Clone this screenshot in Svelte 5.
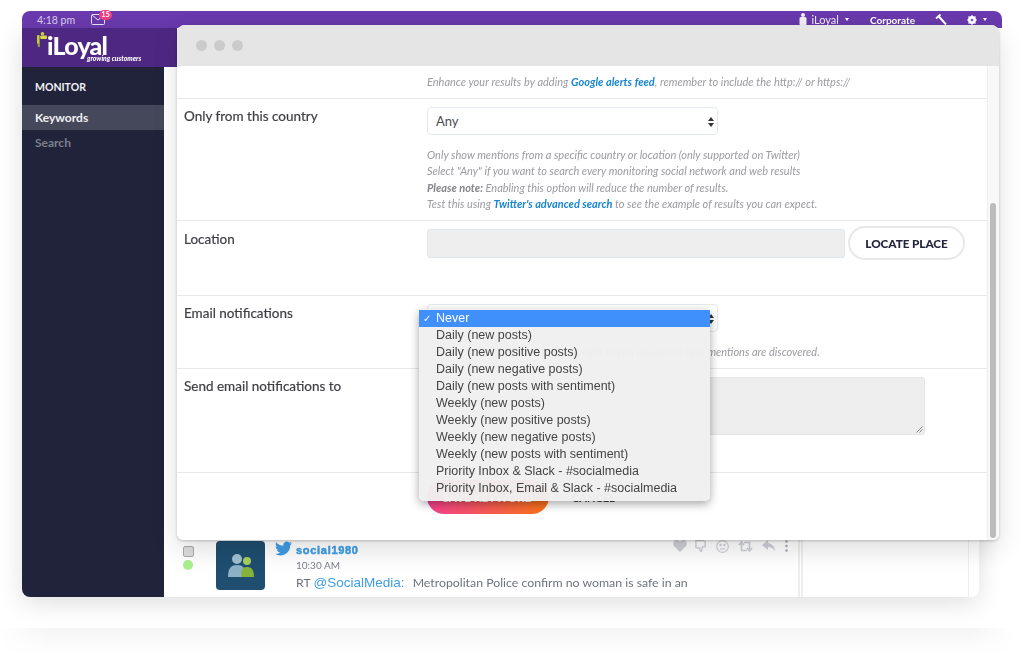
<script>
  let options = [
    "Never",
    "Daily (new posts)",
    "Daily (new positive posts)",
    "Daily (new negative posts)",
    "Daily (new posts with sentiment)",
    "Weekly (new posts)",
    "Weekly (new positive posts)",
    "Weekly (new negative posts)",
    "Weekly (new posts with sentiment)",
    "Priority Inbox & Slack - #socialmedia",
    "Priority Inbox, Email & Slack - #socialmedia"
  ];
</script>

<div class="stage">
  <div class="frame">
    <header class="topbar">
      <span class="time">4:18 pm</span>
      <span class="mail">
        <svg width="14" height="11" viewBox="0 0 14 11" fill="none" stroke="#e6ddf5" stroke-width="1">
          <rect x="0.5" y="0.5" width="13" height="10" rx="1" />
          <path d="M1 1l6 5 6-5" />
        </svg>
        <span class="count">15</span>
      </span>
      <span class="spacer"></span>
      <span class="account">
        <svg width="8" height="13" viewBox="0 0 8 13" fill="#f1eef6">
          <circle cx="4" cy="2" r="2" />
          <rect x="0.500" y="4" width="7" height="8.500" rx="1.500" />
        </svg>
        iLoyal
      </span>
      <span class="caret"></span>
      <span class="corp">Corporate</span>
      <svg class="tools" width="12" height="11" viewBox="0 0 12 11" stroke="#fff" fill="none">
        <path d="M3 1.500l8 9" stroke-width="2" />
        <path d="M1 4.500L5.500 0.500" stroke-width="1.800" />
      </svg>
      <svg class="gear" width="10" height="10" viewBox="0 0 10 10">
        <circle cx="5" cy="5" r="3" fill="none" stroke="#fff" stroke-width="2" />
        <path d="M5 0v10M0 5h10M1.500 1.500l7 7M8.500 1.500l-7 7" stroke="#fff" stroke-width="1.100" />
        <circle cx="5" cy="5" r="1.100" fill="#6a3aae" />
      </svg>
      <span class="caret last"></span>
    </header>

    <div class="shell">
      <aside class="sidebar">
        <div class="brand">
          <svg class="brand-mark" width="10" height="15" viewBox="0 0 10 15" fill="#c6cd3c">
            <circle cx="5.500" cy="1.800" r="1.800" />
            <rect x="0" y="3" width="2.600" height="9" rx="1" />
            <rect x="3.200" y="3.500" width="6.800" height="3.500" rx="1" fill="#d6da4a" />
            <rect x="0.800" y="11" width="2" height="4" fill="#9da52e" />
          </svg>
          <span class="brand-name">iLoyal</span>
          <span class="brand-tag">growing customers</span>
        </div>
        <div class="section">MONITOR</div>
        <div class="nav active">Keywords</div>
        <div class="nav">Search</div>
      </aside>

      <main class="feed">
        <div class="post-col">
          <div class="post">
            <div class="marks">
              <span class="check"></span>
              <span class="dot"></span>
            </div>
            <div class="avatar">
              <svg width="28" height="26" viewBox="0 0 28 26">
                <circle cx="10" cy="6" r="5" fill="#9fc0d2" />
                <path d="M1 24c0-9 3-12 9-12s9 3 9 12z" fill="#8db2c6" />
                <circle cx="20" cy="8" r="4" fill="#a6cf5b" />
                <path d="M14 24c0-8 2-10 6-10s7 2 7 10z" fill="#86b23e" />
              </svg>
            </div>
            <svg class="bird" width="17" height="15" viewBox="0 0 24 20">
              <path fill="#3f9de4" d="M23.953 2.57a10 10 0 01-2.825.775 4.958 4.958 0 002.163-2.723c-.951.555-2.005.959-3.127 1.184a4.92 4.92 0 00-8.384 4.482C7.69 6.095 4.067 4.13 1.64 1.162a4.822 4.822 0 00-.666 2.475c0 1.71.87 3.213 2.188 4.096a4.904 4.904 0 01-2.228-.616v.06a4.923 4.923 0 003.946 4.827 4.996 4.996 0 01-2.212.085 4.936 4.936 0 004.604 3.417 9.867 9.867 0 01-6.102 2.105c-.39 0-.779-.023-1.17-.067a13.995 13.995 0 007.557 2.209c9.053 0 13.998-7.496 13.998-13.985 0-.21 0-.42-.015-.63A9.935 9.935 0 0024 2.59z" />
            </svg>
            <div class="post-text">
              <div class="user">social1980</div>
              <div class="stamp">10:30 AM</div>
              <div class="tweet"><span class="rt">RT</span> <span class="at">@SocialMedia:</span> <span class="msg">Metropolitan Police confirm no woman is safe in an</span></div>
            </div>
            <div class="actions">
              <svg width="14" height="12" viewBox="0 0 15 13" fill="#ced0d6"><path d="M7.500 13L1 6.500C-1 3.500 1 0 4 0c1.600 0 2.800.8 3.500 2C8.200.8 9.400 0 11 0c3 0 5 3.500 3 6.500z" /></svg>
              <svg class="thumb-icon" width="12" height="14" viewBox="0 0 13 14" fill="none" stroke="#ced0d6" stroke-width="1.500"><path d="M1 1h7l3 1v6H8l-1 5c-2 0-2-2-2-4H2C1 9 .5 8 1 7z" /></svg>
              <svg class="face-icon" width="13" height="13" viewBox="0 0 13 13" fill="none" stroke="#ced0d6" stroke-width="1.200"><circle cx="6.500" cy="6.500" r="5.800" /><path d="M4 9h5" /><circle cx="4.500" cy="5" r=".6" /><circle cx="8.500" cy="5" r=".6" /></svg>
              <svg class="rt-icon" width="15" height="11" viewBox="0 0 15 11" fill="none" stroke="#ced0d6" stroke-width="1.700"><path d="M1 4L3.500 1 6 4M3.500 1.500V9.500H9M14 7L11.500 10 9 7M11.500 9.500V1.500H6" /></svg>
              <svg class="reply-icon" width="14" height="12" viewBox="0 0 14 12" fill="#ced0d6"><path d="M6 0L0 5l6 5V7c3 0 5 1 7 4.500C13 7 10 3.500 6 3z" /></svg>
              <svg class="more-icon" width="3" height="12" viewBox="0 0 3 12" fill="#a9abb3"><circle cx="1.500" cy="1.500" r="1.300" /><circle cx="1.500" cy="6" r="1.300" /><circle cx="1.500" cy="10.500" r="1.300" /></svg>
            </div>
          </div>
        </div>
        <div class="side-col"></div>
      </main>
    </div>
  </div>
  <div class="floor"></div>

  <section class="modal">
    <div class="titlebar">
      <span></span><span></span><span></span>
    </div>
    <div class="modal-body">
      <div class="content">
        <div class="row top-row">
          <div></div>
          <p class="help">Enhance your results by adding <a>Google alerts feed</a>, remember to include the http:// or https://</p>
        </div>

        <div class="row country">
          <div class="label">Only from this country</div>
          <div>
            <div class="select">Any<span class="updown"></span></div>
            <p class="help spaced">
              Only show mentions from a specific country or location (only supported on Twitter)<br />
              Select "Any" if you want to search every monitoring social network and web results<br />
              <b>Please note:</b> Enabling this option will reduce the number of results.<br />
              Test this using <a>Twitter's advanced search</a> to see the example of results you can expect.
            </p>
          </div>
        </div>

        <div class="row location">
          <div class="label">Location</div>
          <div class="locate">
            <div class="input"></div>
            <button class="pill">LOCATE PLACE</button>
          </div>
        </div>

        <div class="row email">
          <div class="label">Email notifications</div>
          <div class="email-field">
            <div class="select"><span class="updown"></span></div>
            <div class="menu">
              {#each options as opt, i}
                <div class="opt" class:on={i === 0}>
                  {#if i === 0}<span class="tick">✓</span>{/if}
                  {opt}
                </div>
              {/each}
            </div>
            <p class="help spaced">Get an email notification sent out right to you as soon as new mentions are discovered.</p>
          </div>
        </div>

        <div class="row send">
          <div class="label">Send email notifications to</div>
          <div class="textarea">
            <svg width="7" height="7" viewBox="0 0 7 7" stroke="#888" fill="none"><path d="M0.500 6.500l6-6M3.500 6.500l3-3" /></svg>
          </div>
        </div>

        <div class="row buttons">
          <div></div>
          <div class="btn-row">
            <button class="save">SAVE KEYWORD</button>
            <span class="cancel">CANCEL</span>
          </div>
        </div>
      </div>
      <div class="scrollbar"><div class="thumb"></div></div>
    </div>
  </section>
</div>

<style>
  :global(body) {
    margin: 0;
    background: #fff;
  }

  .stage {
    position: relative;
    width: 1024px;
    height: 656px;
    padding-top: 11px;
    box-sizing: border-box;
    overflow: hidden;
    font-family: Lato, "Open Sans", sans-serif;
    filter: blur(0.5px);
  }

  .frame {
    margin-left: 22px;
    width: 980px;
  }

  .topbar {
    height: 17px;
    background: #6a3aae;
    border-radius: 8px 8px 0 0;
    display: flex;
    align-items: center;
    color: #fff;
    padding: 0 15px 0 15px;
    box-sizing: border-box;
    font-size: 10px;
  }

  .time {
    color: #d6cbe8;
    font-size: 10.5px;
  }

  .mail {
    position: relative;
    margin-left: 16px;
    display: flex;
  }

  .count {
    position: absolute;
    left: 8px;
    top: -4px;
    width: 13px;
    height: 10px;
    border-radius: 5px;
    background: #ee3f7f;
    font-size: 7.5px;
    line-height: 10px;
    text-align: center;
    font-weight: 700;
  }

  .spacer {
    flex: 1;
  }

  .account {
    display: flex;
    align-items: center;
    gap: 4px;
    font-size: 11px;
    color: #f0ecf7;
  }

  .caret {
    width: 0;
    height: 0;
    border-left: 2.5px solid transparent;
    border-right: 2.5px solid transparent;
    border-top: 3px solid #fff;
    margin-left: 6px;
  }

  .corp {
    margin-left: 21px;
    font-weight: 700;
    font-size: 10px;
  }

  .tools {
    margin-left: 20px;
  }

  .gear {
    margin-left: 20px;
  }

  .caret.last {
    margin-left: 6px;
  }

  .shell {
    width: 957px;
    height: 569px;
    display: flex;
    background: #fff;
    border-radius: 0 0 8px 8px;
    box-shadow: 0 6px 26px rgba(0, 0, 0, 0.13);
    overflow: hidden;
  }

  .sidebar {
    width: 142px;
    flex-shrink: 0;
    background: #20233a;
    display: flex;
    flex-direction: column;
    position: relative;
  }

  .brand {
    height: 39px;
    width: 155px;
    background: #4e2783;
    position: relative;
    flex-shrink: 0;
    color: #fff;
    display: flex;
    padding-left: 15px;
    box-sizing: border-box;
  }

  .brand-mark {
    margin-top: 4px;
    flex-shrink: 0;
  }

  .brand-name {
    font-size: 25px;
    font-weight: 900;
    line-height: 30px;
    letter-spacing: -0.8px;
    margin-top: 2px;
  }

  .brand-tag {
    position: absolute;
    left: 65px;
    top: 26px;
    font-size: 6.800px;
    font-weight: 900;
    font-style: italic;
    white-space: nowrap;
  }

  .section {
    margin-top: 14px;
    padding-left: 13px;
    color: #f2f2f5;
    font-size: 10.500px;
    font-weight: 700;
    line-height: 13px;
  }

  .nav {
    padding-left: 13px;
    height: 25px;
    line-height: 25px;
    font-size: 12px;
    font-weight: 700;
    color: #7d7f8e;
  }

  .nav.active {
    margin-top: 11px;
    background: #45485a;
    color: #f0f0f4;
  }

  .feed {
    flex: 1;
    display: flex;
    justify-content: flex-end;
    background: #fff;
    min-width: 0;
  }

  .post-col {
    flex: 1;
    display: flex;
    align-items: flex-end;
    border-right: 5px double #eee;
  }

  .side-col {
    width: 165px;
    border-right: 1px solid #eee;
    margin-right: 10px;
  }

  .post {
    position: relative;
    display: flex;
    height: 56px;
    width: 100%;
    padding-left: 19px;
    box-sizing: border-box;
  }

  .marks {
    width: 33px;
    padding-top: 5px;
    display: flex;
    flex-direction: column;
    align-items: flex-start;
    gap: 3px;
  }

  .check {
    width: 9px;
    height: 9px;
    border: 1px solid #aaa;
    border-radius: 2px;
    background: #ddd;
  }

  .dot {
    width: 10px;
    height: 10px;
    border-radius: 50%;
    background: #a8f08f;
  }

  .avatar {
    width: 49px;
    height: 49px;
    background: #1f4e70;
    border-radius: 4px;
    display: flex;
    align-items: center;
    justify-content: center;
  }

  .bird {
    margin: 0 0 0 10px;
    flex-shrink: 0;
  }

  .post-text {
    margin-left: 4px;
    margin-top: 2px;
  }

  .user {
    font-family: "Liberation Sans", Arial, sans-serif;
    font-weight: 700;
    font-size: 11px;
    color: #3f9de4;
    letter-spacing: 0.7px;
    line-height: 14px;
    -webkit-text-stroke: 0.5px #3f9de4;
  }

  .stamp {
    font-size: 10px;
    color: #7b7e88;
    line-height: 16px;
  }

  .tweet {
    font-size: 12.300px;
    color: #6f7380;
    white-space: nowrap;
    line-height: 20px;
  }

  .at {
    font-family: "Liberation Sans", Arial, sans-serif;
    font-size: 13.500px;
    color: #3f9de4;
    margin-right: 5px;
  }

  .actions {
    position: absolute;
    left: 509px;
    top: -2px;
    display: flex;
    align-items: center;
  }

  .thumb-icon {
    margin-left: 8px;
  }

  .face-icon {
    margin-left: 9px;
  }

  .rt-icon {
    margin-left: 9px;
  }

  .reply-icon {
    margin-left: 9px;
  }

  .more-icon {
    margin-left: 9px;
  }

  .floor {
    width: 1024px;
    height: 28px;
    margin-top: 31px;
    background: linear-gradient(#f5f5f5, #fff);
    -webkit-mask-image: linear-gradient(90deg, transparent, #000 50px, #000 970px, transparent 1015px);
    mask-image: linear-gradient(90deg, transparent, #000 50px, #000 970px, transparent 1015px);
  }

  /* overlay window */
  .modal {
    position: absolute;
    left: 177px;
    top: 25px;
    width: 822px;
    height: 515px;
    display: flex;
    flex-direction: column;
    border-radius: 8px 8px 6px 6px;
    box-shadow: 0 1px 3px rgba(0, 0, 0, 0.22), 0 10px 26px rgba(0, 0, 0, 0.13);
    overflow: hidden;
    background: #fff;
  }

  .titlebar {
    height: 41px;
    background: #e5e5e5;
    display: flex;
    align-items: center;
    gap: 7px;
    padding: 0 0 0 19px;
    flex-shrink: 0;
  }

  .titlebar span {
    width: 11px;
    height: 11px;
    border-radius: 50%;
    background: #cbcbcb;
  }

  .modal-body {
    flex: 1;
    display: flex;
    min-height: 0;
  }

  .content {
    flex: 1;
    min-width: 0;
  }

  .scrollbar {
    width: 12px;
    background: #f8f8f8;
    border-left: 1px solid #eee;
    box-sizing: border-box;
    padding: 137px 3px 2px 2px;
  }

  .thumb {
    height: 100%;
    background: #bcbcbc;
    border-radius: 3px;
  }

  .row {
    display: grid;
    grid-template-columns: 243px 1fr;
    padding-left: 7px;
    border-bottom: 1px solid #e6e8ea;
    box-sizing: border-box;
  }

  .top-row {
    height: 33px;
    padding-top: 8px;
  }

  .top-row .help {
    word-spacing: 0.15px;
  }

  .country {
    height: 122px;
    padding-top: 7px;
  }

  .country .select {
    margin-top: 1px;
  }

  .location {
    height: 75px;
    padding-top: 5px;
  }

  .location .label {
    margin-top: 3px;
  }

  .email {
    height: 73px;
    padding-top: 7px;
  }

  .email .select {
    margin-top: 1px;
  }

  .email .menu {
    top: 6px;
  }

  .send {
    height: 104px;
    padding-top: 7px;
  }

  .send .textarea {
    margin-top: 1px;
  }

  .buttons {
    border-bottom: none;
    padding-top: 7px;
  }

  .label {
    font-size: 13.500px;
    line-height: 20px;
    color: #3e3e44;
    -webkit-text-stroke: 0.2px #3e3e44;
  }

  .help {
    margin: 0;
    font-size: 11px;
    line-height: 16.300px;
    font-style: italic;
    color: #9b9ba0;
    white-space: nowrap;
  }

  .help.spaced {
    margin-top: 12px;
  }

  .help a {
    color: #1a86d0;
    font-weight: 700;
  }

  .help b {
    font-weight: 700;
    color: #85858a;
  }

  .select {
    position: relative;
    width: 291px;
    height: 28px;
    box-sizing: border-box;
    border: 1px solid #e3e9ef;
    border-radius: 4px;
    padding-left: 8px;
    font-size: 13px;
    line-height: 26px;
    color: #4c4c4c;
    background: #fff;
  }

  .updown {
    position: absolute;
    right: 3px;
    top: 9px;
    width: 0;
    height: 0;
    border-left: 3px solid transparent;
    border-right: 3px solid transparent;
    border-bottom: 4px solid #333;
  }

  .updown::after {
    content: "";
    position: absolute;
    left: -3px;
    top: 6px;
    border-left: 3px solid transparent;
    border-right: 3px solid transparent;
    border-top: 4px solid #333;
  }

  .locate {
    display: flex;
    align-items: flex-start;
    gap: 3px;
  }

  .input {
    width: 418px;
    height: 29px;
    margin-top: 3px;
    box-sizing: border-box;
    background: #eee;
    border: 1px solid #dfe6ec;
    border-radius: 3px;
  }

  .pill {
    width: 117px;
    height: 34px;
    background: #fff;
    border: 2px solid #e8e8e8;
    border-radius: 17px;
    font-family: Lato, sans-serif;
    font-weight: 900;
    font-size: 11.800px;
    letter-spacing: -0.1px;
    color: #23263f;
    padding: 0;
  }

  .email-field {
    position: relative;
  }

  .menu {
    position: absolute;
    left: -8px;
    top: 5px;
    width: 291px;
    height: 192px;
    box-sizing: border-box;
    padding-top: 1px;
    background: rgba(240, 240, 240, 0.97);
    border-radius: 5px;
    box-shadow: 0 3px 10px rgba(0, 0, 0, 0.35);
    z-index: 2;
    font-family: "Liberation Sans", Arial, sans-serif;
    font-size: 12.500px;
    color: #444;
  }

  .opt {
    position: relative;
    height: 17px;
    line-height: 17px;
    padding-left: 17px;
  }

  .opt.on {
    background: #3f90fb;
    color: #fff;
  }

  .tick {
    position: absolute;
    left: 4px;
    font-size: 10px;
    font-weight: 700;
    font-family: "DejaVu Sans", sans-serif;
  }

  .textarea {
    position: relative;
    width: 498px;
    height: 58px;
    background: #eee;
    border: 1px solid #e6e6e6;
    box-sizing: border-box;
    border-radius: 3px;
  }

  .textarea svg {
    position: absolute;
    right: 1px;
    bottom: 1px;
  }

  .btn-row {
    display: flex;
    align-items: center;
  }

  .save {
    width: 122px;
    height: 34px;
    border: none;
    border-radius: 17px;
    background: linear-gradient(90deg, #f5408f, #f97316);
    color: #fff;
    font-family: Lato, sans-serif;
    font-weight: 900;
    font-size: 11.500px;
    padding: 0;
  }

  .cancel {
    margin-left: 23px;
    font-size: 11px;
    font-weight: 700;
    color: #444;
  }
</style>
